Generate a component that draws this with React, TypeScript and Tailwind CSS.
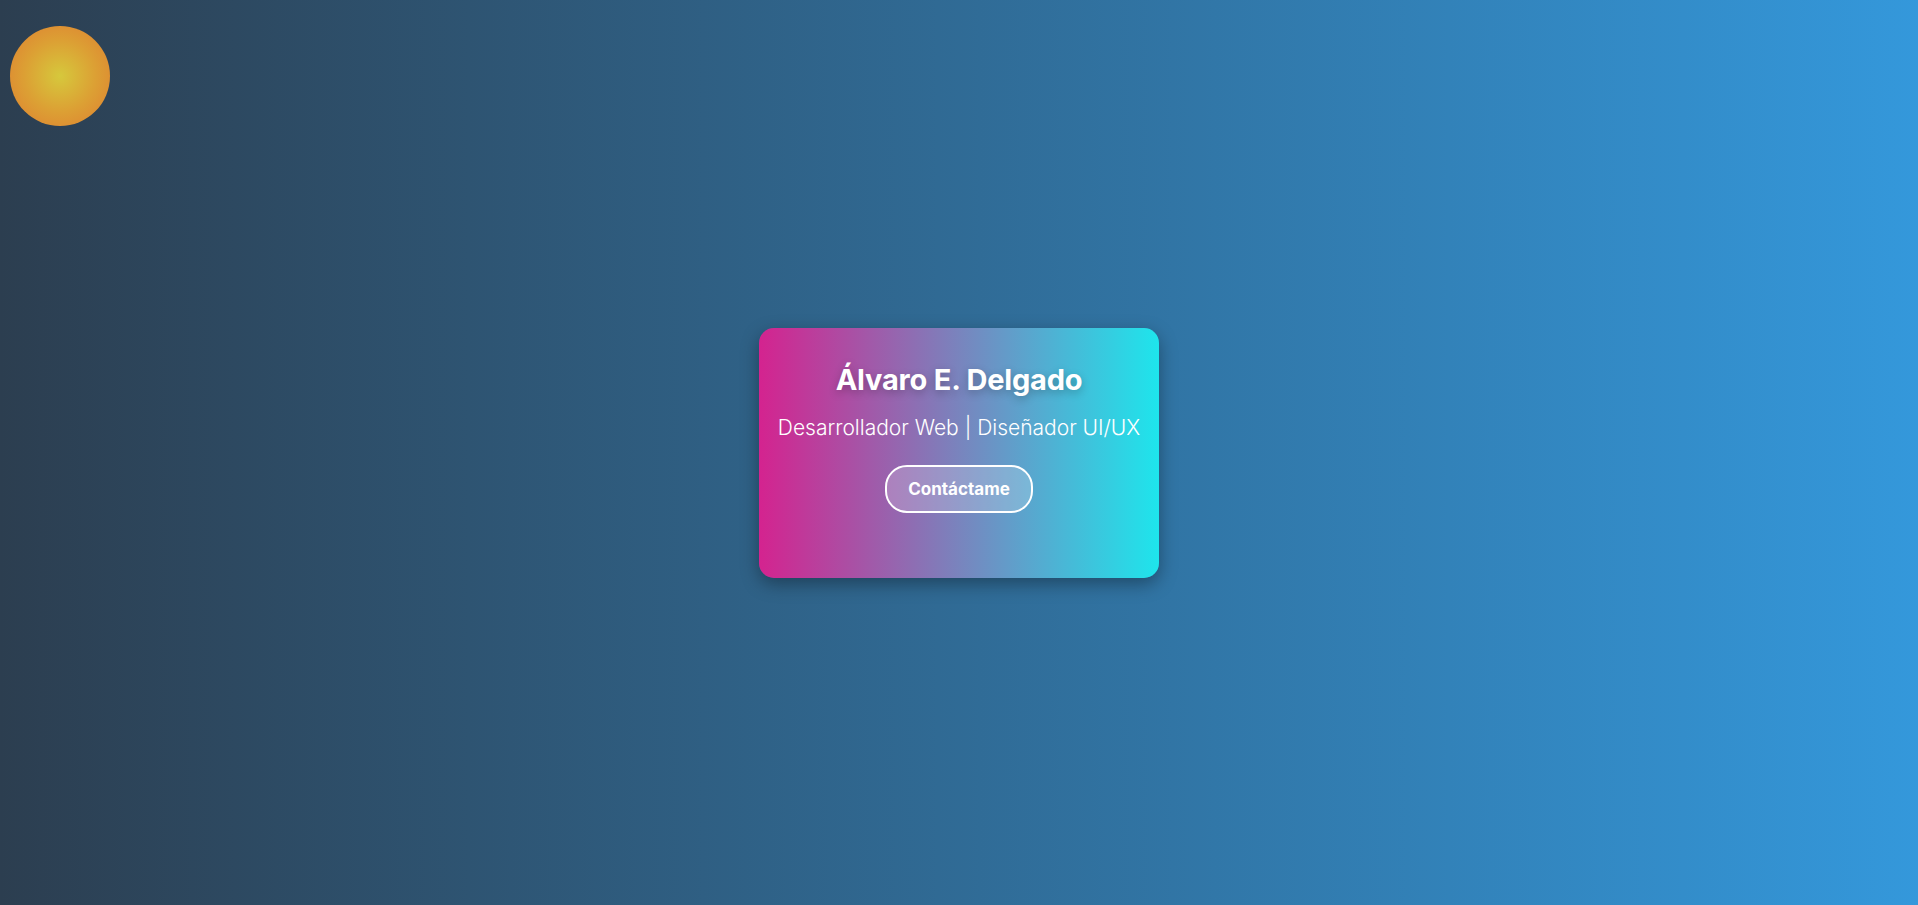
import React from "react";

export default function App() {
  return (
    <div
      className="relative flex h-[905px] w-full items-center justify-center overflow-hidden bg-[linear-gradient(to_right,#2c3e50,#3498db)]"
      style={{ fontFamily: "Inter, 'Noto Sans', sans-serif" }}
    >
      <div className="absolute left-[10px] top-[26px] h-[100px] w-[100px] rounded-full bg-[radial-gradient(circle_at_center,#d6c83c_0%,#dca034_50%,#df7c31_100%)]" />
      <div className="flex h-[250px] w-[400px] flex-col items-center rounded-[15px] bg-[linear-gradient(to_right,#d4238f,#1ee5ec)] pt-[35px] text-white shadow-[0_6px_18px_rgba(0,0,0,0.35)]">
        <h1 className="text-[29px] font-bold leading-[1.2] tracking-[-0.2px] [text-shadow:0_3px_8px_rgba(0,0,0,0.25)]">
          Álvaro E. Delgado
        </h1>
        <p className="mt-[17px] text-[21px] font-light leading-[1.3]">
          Desarrollador Web | Diseñador UI/UX
        </p>
        <button className="mt-[23px] flex h-[48px] w-[148px] items-center justify-center rounded-[22px] border-2 border-white bg-white/20 pt-[2px] text-[17px] font-bold text-white">
          Contáctame
        </button>
      </div>
    </div>
  );
}
